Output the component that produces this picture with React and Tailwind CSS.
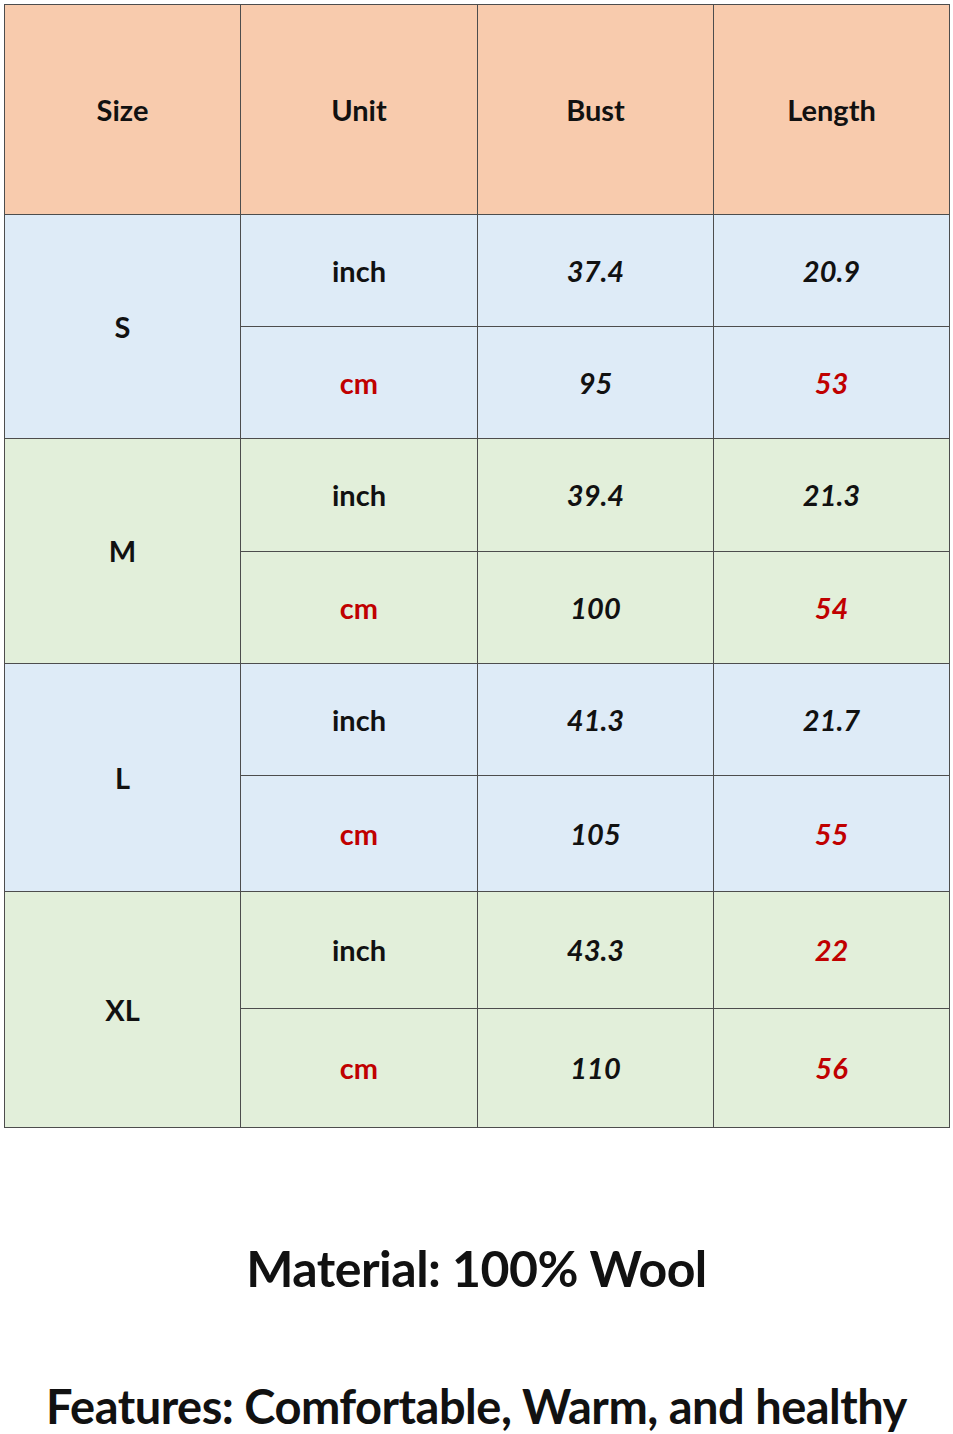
import React from "react";

const font = { fontFamily: "Lato, 'Open Sans', sans-serif" };

const groups = [
  { size: "S", bg: "bg-[#deebf7]", h: ["h-[112px]", "h-[112px]"], rows: [["37.4", false, "20.9", false], ["95", false, "53", true]] },
  { size: "M", bg: "bg-[#e2efda]", h: ["h-[113px]", "h-[112px]"], rows: [["39.4", false, "21.3", false], ["100", false, "54", true]] },
  { size: "L", bg: "bg-[#deebf7]", h: ["h-[112px]", "h-[116px]"], rows: [["41.3", false, "21.7", false], ["105", false, "55", true]] },
  { size: "XL", bg: "bg-[#e2efda]", h: ["h-[117px]", "h-[119px]"], rows: [["43.3", false, "22", true], ["110", false, "56", true]] },
];

const cell = "border border-[#4d4d4d] text-center align-middle p-0";

export default function App() {
  return (
    <div className="w-[953px] h-[1434px] bg-white" style={font}>
      <div className="pt-[4px] pl-[4px]">
        <table className="border-collapse table-fixed w-[945px]">
          <colgroup>
            <col className="w-[236px]" />
            <col className="w-[237px]" />
            <col className="w-[236px]" />
            <col className="w-[236px]" />
          </colgroup>
          <tbody>
            <tr className="h-[210px] bg-[#f8cbad]">
              {["Size", "Unit", "Bust", "Length"].map((t) => (
                <td key={t} className={`${cell} text-[29px] font-bold text-[#111]`}>{t}</td>
              ))}
            </tr>
            {groups.map((g) =>
              g.rows.map((r, i) => (
                <tr key={g.size + i} className={`${g.h[i]} ${g.bg}`}>
                  {i === 0 && (
                    <td rowSpan={2} className={`${cell} text-[29px] font-bold text-[#111]`}>{g.size}</td>
                  )}
                  <td className={`${cell} text-[29px] font-bold ${i === 0 ? "text-[#111]" : "text-[#c00000]"}`}>
                    {i === 0 ? "inch" : "cm"}
                  </td>
                  <td className={`${cell} text-[29px] font-bold italic ${r[1] ? "text-[#c00000]" : "text-[#111]"}`}>{r[0]}</td>
                  <td className={`${cell} text-[29px] font-bold italic ${r[3] ? "text-[#c00000]" : "text-[#111]"}`}>{r[2]}</td>
                </tr>
              ))
            )}
          </tbody>
        </table>
      </div>
      <div className="flex flex-col items-center">
        <div className="mt-[110px] text-[50px] leading-[60px] font-bold text-[#111] tracking-[-0.5px]">Material: 100% Wool</div>
        <div className="mt-[80px] text-[47px] leading-[56px] font-bold text-[#111] tracking-[-0.5px]">Features: Comfortable, Warm, and healthy</div>
      </div>
    </div>
  );
}
